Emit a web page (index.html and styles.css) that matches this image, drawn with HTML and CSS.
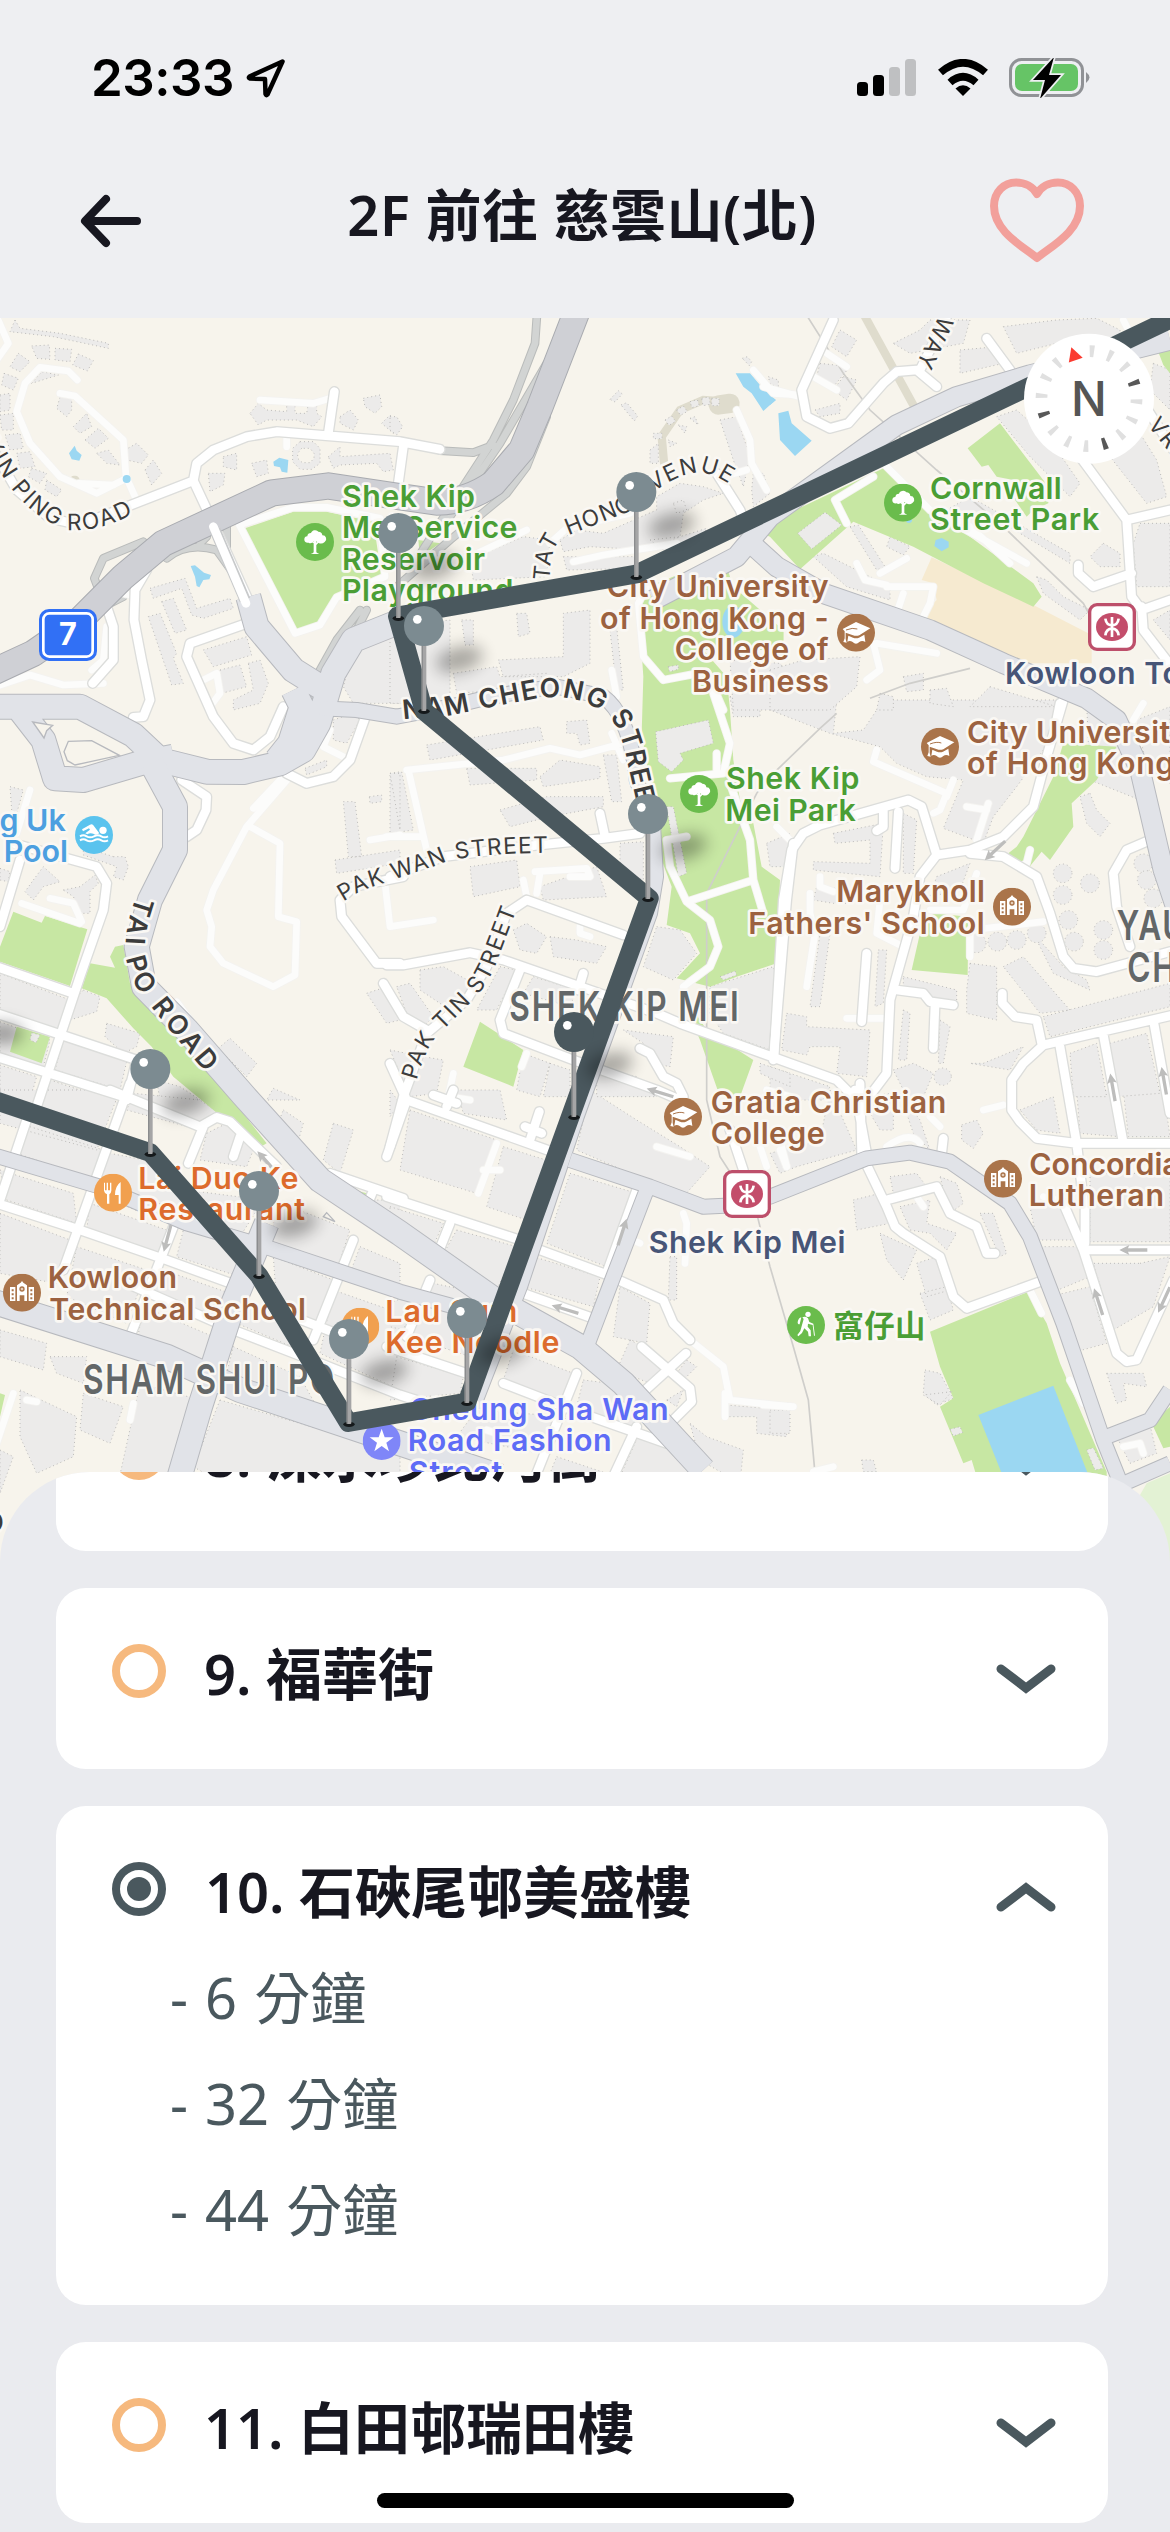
FILE: index.html
```html
<!DOCTYPE html>
<html lang="zh-Hant">
<head>
<meta charset="utf-8">
<title>2F 前往 慈雲山(北)</title>
<link rel="stylesheet" href="styles.css">
</head>
<body>
<div class="screen">
  <header class="top">
    <div class="status">
      <div class="status-left">
        <span class="time">23:33</span>
        <svg class="loc" viewBox="0 0 40 40"><path d="M36.5 3.5 L3.5 18.5 Q2 20 4 20.5 L19 21 L19.500 36 Q20 38 21.500 36.500 Z"/></svg>
      </div>
      <div class="status-right">
        <svg width="60" height="38" viewBox="0 0 60 38"><rect x="0" y="23" width="11" height="14" rx="3.500"/><rect x="16" y="16" width="11" height="21" rx="3.500"/><rect x="32" y="8" width="11" height="29" rx="3.500" fill="#bfc0c2"/><rect x="48" y="0" width="11" height="37" rx="3.500" fill="#bfc0c2"/></svg>
        <svg width="52" height="38" viewBox="0 0 52 38"><path d="M26 37 L18.500 29.500 Q26 23 33.500 29.500 Z"/><path d="M13 23.500 Q26 12 39 23.500" fill="none" stroke="#000" stroke-width="7.500"/><path d="M3.500 13.500 Q26 -6 48.500 13.500" fill="none" stroke="#000" stroke-width="7.500"/></svg>
        <svg width="82" height="40" viewBox="0 0 82 40"><rect x="1.500" y="1.500" width="72" height="36" rx="11" fill="none" stroke="#909296" stroke-width="3"/><rect x="6" y="6" width="63" height="27" rx="7" fill="#66c466"/><path d="M77 14 Q84 19.500 77 25Z" fill="#909296"/><path d="M45 -1 L24 22 H36 L31 41 L52 17 H40 Z" fill="#000" stroke="#eeeff2" stroke-width="3.500" paint-order="stroke"/></svg>
      </div>
    </div>
    <div class="nav">
      <svg class="back" viewBox="0 0 62 54"><path d="M57 27 H7 M26 5 L5 27 L26 49"/></svg>
      <h1>2F 前往 慈雲山(北)</h1>
      <svg class="heart" viewBox="0 0 94 86"><path d="M47 80 C34 69 4 54 4 28 C4 14 14 4.500 26 4.500 C35 4.500 43 9 47 16 C51 9 59 4.500 68 4.500 C80 4.500 90 14 90 28 C90 54 60 69 47 80 Z"/></svg>
    </div>
  </header>

  <section class="map">
  <svg class="map-canvas" viewBox="0 954 3510 3750">
    <defs>
      <filter id="soft" x="-60%" y="-100%" width="220%" height="300%"><feGaussianBlur stdDeviation="24"/></filter>
      <g id="highway">
        <g class="t2"><path d="M-40 1095L100 1030L230 940L370 800L490 700L815 549L985 528L1200 560L1310 576Q1400 576 1480 520L1565 420L1620 290L1740 -20"/></g>
      </g>
      <g id="ramp">
        <g class="t2"><path d="M430 695L310 745L283 805L300 850L370 855M500 745Q560 695 650 720L700 790L740 870M600 700L620 680M680 720V640M320 885L370 860M1080 900L1010 990L960 1080L920 1250L830 1350M1100 900L1000 1100L950 1250"/></g>
        <g class="t3"><path d="M442 0L435 100L370 270L310 390L200 560L60 780M470 160L330 400L180 620M150 422L250 428L310 405M470 320L410 470L350 550L180 690L20 830"/></g>
      </g>
      <g id="arterial">
        <g class="t5"><path class="w75" d="M-20 20H240L400 105L480 180L620 215L730 216L840 190L910 150L955 70L1000 -80L1060 -180L1210 -240M745 -310L770 -220L880 -90L960 -40M880 -30L905 20L870 130L830 180M60 30L130 120L165 235L250 240L420 190L520 170"/></g>
        <g class="t5"><path class="w75" d="M455 190L525 320V450L450 600L410 740L432 860L560 990L730 1185L960 1440L1200 1600L1470 1790L1740 1940L1870 2050L2110 2310"/></g>
        <g class="t3"><path class="w45" d="M-210 1195L-100 1200L20 1220L180 1190Q330 1150 500 1130L640 1160Q720 1220 740 1410L790 1560L798 1700L780 1810L560 2420L390 2930L250 3290"/></g>
        <g class="t8"><path class="w45" d="M-20 195L300 290L560 400L780 465L1200 605L1400 660"/><path class="w75" d="M-20 635L500 800L720 900L1200 1060L1500 1160M800 400L700 640L600 950L530 1190"/></g>
        <g class="t9"><path class="w45" d="M540 210L780 290L940 350L1050 345L1140 320L1430 205L1560 188L1680 215L1860 340L1920 440L2020 700L2140 1050L2200 1200M770 300L670 560L590 770"/></g>
        <g class="t10"><path class="w45" d="M1200 900L1140 990L1010 1040M1040 1190L1200 1120"/></g>
        <g class="t4"><path class="w60" d="M-350 870L-100 740L0 620L380 345L560 260L780 195L1200 90M-80 680L20 770L160 850L480 960L700 1060L950 1165L1040 1230L1110 1380L1180 1680L1220 1800"/></g>
      </g>
      <g id="minor">
        <g class="t2"><path d="M-20 420L50 540L150 625L240 645L380 590L580 512L590 460L640 420L740 380L830 365L1200 395L1320 418M985 370L1003 245M580 512L640 640L740 860M1210 410L1195 520M440 780L405 840L402 930L425 1050L450 1170L430 1220L400 1222M320 890L340 950V1050L278 1120M740 940L570 1000L560 1040L640 1220L700 1300L760 1320L810 1280L850 1190"/></g>
        <g class="t5"><path d="M545 240L620 290L618 330L590 390L560 410M860 220L920 250L1000 230L1050 180L1100 40M60 480L0 680M40 430L290 500L320 550L310 630L240 830L110 1220M-10 800L220 880M-10 940L410 1080L380 1200M-10 1070L370 1190M1210 530L1060 560L1020 600L1025 650L1130 790H1200"/></g>
        <g class="t6"><path d="M-10 795H40L240 758L340 780L600 870L800 940L870 970L1200 1090L1340 1140L1400 1200M0 530L160 470L400 440L640 415L750 400M630 340L645 410M390 810L330 960L340 1000L550 1080L800 1170L870 1200M700 705L410 600L350 640L290 800L230 900L110 1000L40 1190L0 1340M-20 850L40 950L110 990M580 820L565 870M1150 1080L1190 600L1210 430M750 1045L780 1060L820 1130L860 1150L880 1190"/></g>
        <g class="t7"><path d="M12 1070L40 600L65 450L100 400L150 375L415 300L455 320L500 465L600 450L700 410L790 320L830 170L880 0L890 -30M500 465L450 530L430 650L360 900L350 1120L290 1200M600 460L700 470L800 530L840 640L880 770L910 805L980 815L1200 755M385 335L375 505M340 330V380L320 392M1140 420L1070 450L1030 520L1040 620L1080 740M1210 945L820 1035L760 1090L725 1140V1230L750 1265L800 1315L920 1330H1200M697 880V910L735 950L800 960L815 1030M290 760L275 965M380 870L460 880L480 905L550 915M495 915L490 1045M870 1040L920 1330L940 1500M1000 1005L1060 1330M1150 960L1200 1240"/></g>
        <g class="t10"><path d="M880 340L940 480L1040 790L1070 815L1100 810L1210 570M940 480H1210M945 460V340M290 225L350 350L375 410L400 430L510 500L550 620L590 655L810 575M350 330L500 290L540 370L620 410L650 490H675M520 145L515 190M270 -20L275 190M255 0L290 190"/></g>
        <g class="t9"><path d="M0 -80L50 30L500 190M50 30L-10 200M-10 320L390 450M450 480L640 550L820 630L850 700L900 750M180 400L140 500M120 570L50 740M400 610L610 685M740 300L650 550M-10 770L230 850M340 880L560 965L830 1060M560 850L440 1150M740 1010L670 1160M755 770L900 895L905 935L850 990M888 790L750 915M448 65L420 150M405 110L455 130M190 0L170 50M130 15L200 40M1020 120L1060 240"/></g>
        <g class="t8"><path d="M390 -20L190 540M80 90L0 330M-10 340L240 420L500 510L720 590M700 200L720 140M610 110L565 220M540 360L390 740M380 580L700 720L960 820L1200 915L1340 960M330 0L600 110L650 82L690 95L830 230M1060 450L940 750M990 250L1210 325M880 680L1060 750M1100 350L1120 300"/></g>
        <g class="t4"><path d="M190 30L95 240L110 320L180 355L235 340L340 220L380 185L440 180L500 230M450 180L530 20M650 85L720 180M930 440L1070 630L1200 600M1070 630L1085 860L1115 900L1200 870M1085 790L970 830L925 790V765M1115 890L1120 960L1220 1090M870 1180L860 1230M1120 280L1210 420M-160 490L-90 600L-60 680"/></g>
      </g>
      <g id="lane">
        <g class="t2"><path d="M232 210L205 183L120 172L75 220L50 305L90 400L180 500L290 550L380 505M180 250L225 258L370 390L378 500L405 560M235 520L340 525M780 270L940 280L1000 262M-10 20L25 100L-10 150M718 645L880 592H980L1140 625L1155 800L1010 862L960 945L885 970L718 645M0 1125L90 1095L190 1125L310 1120M860 385V410M370 850L410 860M320 950L310 1050L275 1080M610 1110L650 1090L660 1150L630 1190"/></g>
        <g class="t3"><path d="M480 700L530 655L720 610M550 755L640 735L700 725L860 700M240 740L410 660M770 830L745 880L760 1040L820 1110L950 1085L1000 1200M1040 300L1080 390L1085 460L1130 540M1090 180L1150 250L1230 255M665 1080L680 1160M1000 500L1070 480"/></g>
        <g class="t4"><path d="M-20 230L90 260M170 130L230 170M130 200L200 240M350 470L480 600L770 760M310 500L195 570L230 640M480 600L600 650L720 760M260 760L285 810L350 825M330 790L410 745M350 830L490 830L480 880L440 960M400 850L370 940M320 1000L500 1030M310 1000L330 1080L290 1110M1060 30L1080 70"/></g>
        <g class="t5"><path d="M870 230L740 380L640 570L620 630L635 680L630 740L670 790L820 860L885 825L890 665L835 650L840 430L750 380M850 230L760 325M65 610L240 670M150 595L220 610L245 665M90 270L50 400M970 140L1030 170M990 90L970 140M1110 420L1200 405M1155 550L1170 680L1300 660M1160 860L1215 960M530 905L570 960"/></g>
        <g class="t6"><path d="M50 210L340 180L480 145L570 165L700 130M55 210L110 450M-10 410H100M665 100L700 180M970 -20L1020 130L1000 220L840 235M980 160V220M1020 250L1080 420L1090 540L890 605L840 500L830 420L890 410M1090 540L1120 640M890 605L960 660L985 740L960 800L880 860M435 515L590 505L600 530H540M450 520L440 580M400 540L410 590M570 680V700L600 710M410 1060L395 1100M190 1120L175 1190L240 1200"/></g>
        <g class="t7"><path d="M320 150L310 185L530 280L510 330L490 340M550 240L530 290M655 310L620 420M590 320L650 330M120 580V640L135 700L110 860M150 530V560L190 575M330 600L320 700L400 740M600 770V690L820 665M480 630H580L620 520M780 450L770 490L750 500M230 955H340M20 380L60 420M1120 10L1090 60"/></g>
        <g class="t9"><path d="M900 750L1000 830L1020 930L1200 950M1005 910V980M880 370L890 400L885 520M740 455L750 460M320 160L265 310M280 240H330M800 170L900 200M1110 170L1130 230M1170 180L1190 230M290 1020L320 1030"/></g>
        <g class="t10"><path d="M-20 945L70 950M130 1145L190 1130M30 150L50 230M-10 0L60 20M640 60L700 45M780 600L815 670M900 870L940 940M1060 1070L1110 1060L1120 1090M350 170Q420 120 450 160M480 80L510 110M440 320L460 350M820 320L900 340"/></g>
        <g class="t8"><path d="M40 910L-20 1090M80 930L110 935M400 940L390 990"/></g>
      </g>
      <symbol id="tree" viewBox="-57 -57 114 114"><circle r="57" fill="#6abc4c"/><path fill="#fff" d="M-4 4L-14-2L-12-5L-4-1V-4H4V2L12-4L14-1L4 9V31Q8 34 13 36H-13Q-6 34-4 31Z"/><path fill="#fff" d="M-12-27A13 13 0 0 1 10-31A12 12 0 0 1 22-20A11 11 0 0 1 29 0Q20 8 10 2L4-2H-4Q-12 7-19 2Q-30 4-32-6Q-33-16-23-17Q-22-27-12-27Z"/></symbol>
      <symbol id="college" viewBox="-57 -57 114 114"><circle r="57" fill="#aa744a"/><path fill="#fff" d="M-40-11L0-32L43-13L10 8Q0 11-9 8L-31 0V19L-28 30L-38 28L-34 17V-4Z"/><path fill="none" stroke="#aa744a" stroke-width="3" d="M-30-8Q-10-16 4-11"/><path fill="#fff" d="M-23 9L-9 15Q0 18 9 15L25 6L28 28Q18 22 10 28Q0 38-10 28Q-18 23-26 27Z"/></symbol>
      <symbol id="school" viewBox="-57 -57 114 114"><circle r="57" fill="#aa744a"/><path fill="#fff" d="M-36-17H-20V25H-36ZM20-17H36V25H20ZM-15-22L-4-30L0-35L4-30L15-22V25H7V8H-7V25H-15Z"/><circle cy="-11" r="8" fill="#aa744a"/><circle cy="-11" r="4" fill="#e5cdb9"/><path fill="#aa744a" d="M-31-10h6v6h-6zM-31 2h6v6h-6zM-31 14h6v6h-6zM25-10h6v6h-6zM25 2h6v6h-6zM25 14h6v6h-6z"/></symbol>
      <symbol id="food" viewBox="-57 -57 114 114"><circle r="57" fill="#f1a04f"/><path fill="#fff" d="M-27-30H-24V-7H-19V-30H-15V-7H-9V-30H-5V-6Q-6 3-11 5V33H-18V5Q-25 3-27-6ZM23-32V33H17V7H6Q6-20 23-32Z"/></symbol>
      <symbol id="swim" viewBox="-57 -57 114 114"><circle r="57" fill="#5ac3ee"/><circle cx="27" cy="-14" r="11" fill="#fff"/><path fill="#fff" d="M-36-17L-12-31Q-6-34-2-29L16-5Q6 3-2-4Q-12-8-20-2L-26-5L-12-16L-15-20L-33-11Z"/><path fill="none" stroke="#fff" stroke-width="6" d="M-42 4Q-32-2-22 4T0 4T22 4T42 4M-42 16Q-32 10-22 16T0 16T22 16T42 16"/></symbol>
      <symbol id="hike" viewBox="-57 -57 114 114"><circle r="57" fill="#6abc4c"/><circle cx="6" cy="-32" r="8" fill="#fff"/><path fill="#fff" d="M-11-23Q-2-27 6-20L10-9L22-4L27 32H24L20 0L6-4L5 5L14 16L15 34H8L6 20L-5 10L-12 24L-23 34L-26 30L-17 18L-7-18Z"/><path fill="#fff" d="M-14-23L-19-2Q-26-2-25-9Q-23-21-14-23Z"/></symbol>
      <symbol id="sight" viewBox="-57 -57 114 114"><circle r="57" fill="#7f86f8"/><path fill="#fff" d="M0-37L9-11H36L14 5L22 31L0 15L-22 31L-14 5L-36-11H-9Z"/></symbol>
      <symbol id="mtr" viewBox="-74 -74 148 148"><rect x="-67" y="-67" width="134" height="134" rx="22" fill="#fff" stroke="#bd4f6b" stroke-width="10"/><ellipse rx="48" ry="42" fill="#c34d6b"/><path fill="none" stroke="#fff" stroke-width="8" d="M0-30V30M-20-25Q-17-5 0-5Q17-5 20-25M-20 25Q-17 5 0 5Q17 5 20 25"/></symbol>
      <symbol id="pin" viewBox="-70 -70 300 350"><ellipse cx="106" cy="100" rx="72" ry="36" transform="rotate(-15 106 100)" fill="#000" opacity=".32" filter="url(#soft)"/><ellipse cy="256" rx="17" ry="8" fill="#15191b"/><rect x="-7" y="50" width="14" height="205" rx="3" fill="#a5a5a6"/><rect x="-7" y="50" width="4" height="205" fill="#8b8c8e"/><circle r="60"/><circle cx="-20" cy="-20" r="13" fill="#fff"/></symbol>
      <symbol id="oneway" viewBox="-45 -20 90 40"><path fill="#bdbdbc" d="M-42 0L-12-15L-16-5H42V5H-16L-12 15Z"/></symbol>
    </defs>

    <rect x="0" y="954" width="3510" height="3750" fill="#f7f4ec"/>

    <g class="sand">
      <path class="t4" d="M485 742L790 885L965 975V1060H740L465 955L470 900L500 870L490 820L455 810Z"/>
    </g>
    <g class="trail">
      <path class="t3" d="M822 458L815 380L870 300L940 270L1010 275"/><path class="t3 wide" d="M985 285L1020 280"/><path class="t4" d="M285 20L430 285"/>
      <path class="t2" d="M222 510H226"/>
    </g>

    <g class="block">
      <path class="t5" d="M0 820L210 900L170 1000L0 940ZM0 965L150 1020L130 1100L0 1060ZM190 1015L380 1085L360 1170L165 1110ZM0 1095L110 1130L90 1200H0ZM150 1140L360 1210H130ZM250 870L300 890L290 935L210 960L200 930ZM320 970L420 1000L410 1040L370 1060L315 1010ZM470 1140L540 1160L600 1200H480Z"/>
      <path class="t8" d="M0 0L360 0L290 180L0 100ZM400 10L600 30L660 70L600 120L380 60ZM620 130L680 100L760 180L740 230L600 210ZM90 110L310 180L280 270L50 190ZM0 240L220 310L230 400L20 330ZM330 190L540 230L560 300L790 330L720 440L480 390L260 300ZM0 370L210 450L170 580L0 550ZM270 340L500 420L480 490L260 420ZM550 420L740 470L720 560L530 500ZM490 540L690 610L660 690L430 600ZM230 470L440 540L380 700L200 620ZM430 650L640 740L600 830L410 760ZM820 330L1050 420L1010 540L820 470ZM820 500L1000 570L940 720L830 640ZM1080 470L1200 520V600L1050 550ZM730 620L850 700L900 780L710 700ZM1000 600L1200 670V900L960 790ZM700 770L900 860L950 950L670 890ZM660 930L900 1000L1200 1090V1200H700L580 1130ZM420 880L600 930L520 1200H350ZM250 910L370 950L330 1060L240 1020ZM60 900L230 980L220 1100L110 1150L60 1040ZM0 720L140 760L130 840L0 800ZM150 800L260 800L250 880L170 850ZM0 1080L40 1100L0 1210ZM1120 330H1200V420L1080 370ZM850 60L910 100L890 170L830 110ZM1000 100L1060 120L1020 250L970 210Z"/>
      <path class="t9" d="M0 0L30 40L0 80ZM60 60L320 150L260 310L30 240ZM340 170L500 220L440 400L290 350ZM200 0L330 0L350 90L220 70ZM540 250L740 310L650 530L470 460ZM0 350L160 400L120 490L0 440ZM200 420L380 470L320 600L150 510ZM430 500L630 560L610 650L400 590ZM130 580L320 620L240 800L60 740ZM0 640L90 600L40 720L0 710ZM20 800L220 860L210 910L0 930ZM370 780L550 850L520 940L340 870ZM580 870L660 880L760 990L720 1020L560 950ZM260 960L530 980L450 1090L200 1040ZM500 1100L650 1150H480ZM690 590L780 640L770 760L670 740ZM720 750L760 770L820 840L780 880L680 840ZM890 810L920 830L880 870L860 850ZM830 930L880 900L860 950ZM900 1000L950 1040L1060 1080L1050 1180L930 1110ZM600 0L740 90L870 170L960 230L880 320L790 280L560 180ZM840 500H860V630H835ZM1010 945L1190 960V1040L1100 1030V980H1010Z"/>
      <path class="t9" d="M750 1025L820 1060L900 1120V1160H690Z"/>
      <path class="t10" d="M750 60L850 20L870 130L800 120ZM920 0L1030 0L1050 140L930 130ZM1060 0L1180 0L1200 140H1075ZM960 250H1200V455H960ZM780 350L870 340L920 450L800 450ZM800 470L920 470L960 560L840 610ZM840 620L960 590L1010 760L900 790ZM1110 520L1200 500L1150 650L1030 720L970 520ZM1010 850L1120 850L1130 890L1060 880L1070 930L1040 940ZM250 330L330 310L360 400L260 420ZM330 430L440 480L400 570L350 510ZM440 520L500 500L540 600L470 620ZM450 610L530 590L550 660L480 690ZM270 20L370 10L370 120L330 120ZM390 10L450 90L480 180L430 130ZM180 0L260 180L80 230L30 250L0 190L150 150ZM360 260L440 250L470 290L370 310ZM510 260L560 280L580 340L540 370ZM390 350L480 330L470 400L560 430L530 480L480 430L420 420ZM630 370L670 370L710 490L690 500ZM465 840L510 850L550 925L500 945L460 910ZM0 960H60V1030H0ZM275 1110H310L320 1145H280ZM575 105L620 90L640 130L610 175L575 150ZM1040 1040L1140 1005L1160 1090L1080 1120Z"/>
      <path class="t7" d="M0 0H200L190 100L280 90L340 0H540L870 0L820 150L740 260L670 350L640 430L520 385L580 240L470 230L380 190L330 140L180 100L0 30ZM190 400L340 370L330 530L130 510V485L300 490V420L195 430ZM400 340L440 360L430 520H400ZM130 600L190 610H250V570L140 560ZM150 700H180L150 920H120ZM325 750H350L340 910L315 920ZM50 940L110 950L110 980L300 990L290 1130L200 1120L210 1040H120L110 1065L35 1050ZM400 830L560 870V920L400 860ZM600 790L680 800V960L590 940V870ZM700 800L760 770L830 850L900 930L810 940L740 850ZM950 10L1080 100L1110 300L960 240ZM1100 60L1200 20V250L1130 200ZM400 930L420 940L410 1080H385ZM510 960L540 980L520 1090H505ZM640 1090L760 1040L720 1110L600 1090ZM960 280L980 330L1020 370L990 410L950 370L930 290ZM500 530L600 490L570 570L480 590ZM370 1110L430 1090L490 1120L460 1190H410ZM820 950L1200 850V920L840 1010ZM900 1060L980 1030L1010 1190H910ZM1020 1030L1130 1000L1170 1180L1040 1190ZM0 1100L180 1160L160 1200H0ZM790 700L850 820L960 870L950 840L880 800Z"/>
      <g class="t7"><circle cx="878" cy="520" r="28"/><circle cx="878" cy="585" r="28"/><circle cx="895" cy="660" r="28"/><circle cx="912" cy="725" r="28"/><circle cx="960" cy="550" r="28"/><circle cx="1000" cy="690" r="28"/><circle cx="1000" cy="750" r="28"/><circle cx="1120" cy="490" r="28"/><circle cx="1130" cy="540" r="28"/><circle cx="1150" cy="595" r="28"/><circle cx="620" cy="730" r="28"/><circle cx="682" cy="725" r="28"/><circle cx="740" cy="720" r="28"/><circle cx="800" cy="700" r="28"/><circle cx="518" cy="1130" r="26"/></g>
      <path class="t6" d="M110 135L450 80L460 120L120 180ZM530 65L590 60L600 130L570 135L560 100H530ZM800 95L955 60L970 130L870 160L880 180L845 215L805 185ZM0 220L35 215L70 390L0 400ZM230 205L440 205L440 240L240 255ZM450 230L510 180L630 200V235L460 260ZM330 330L470 290L640 290V320L480 350L360 380ZM640 165L680 165L695 305H665ZM240 500L380 480L390 560L250 590ZM450 560L620 500L650 590L460 600ZM370 690L410 670L470 710L440 760L390 750ZM480 710L560 720L650 740L620 790L490 770ZM690 430L760 425V540L690 520ZM830 320H850L890 520L865 530ZM800 680L870 690L920 760L850 840L760 800ZM90 810L160 800L250 850L180 930L90 870ZM20 860L60 850L130 950L90 990L50 940ZM0 1050L100 1070L160 1080L140 1180L60 1190ZM330 800L380 810L320 930L260 930ZM430 830L560 870L540 920L400 880ZM400 1060L480 1090L450 1190L380 1170ZM480 1090L540 1110V1190H460ZM620 1100L740 1130L800 1190H620ZM700 990L850 1010L840 1100L790 1090L760 1030ZM960 860L1150 800L1160 850L1140 1050L1000 1000L960 940ZM1110 1090L1200 1120V1160L1110 1120ZM1020 -10H1110V50H1030ZM1130 430L1200 400V500H1140Z"/>
      <path class="t5" d="M1030 305H1065L1085 470H1045ZM1005 480L1200 450V490L1010 520ZM1170 220H1200V390ZM1108 290L1145 285V305L1110 310ZM915 205L980 180V200L920 225ZM1000 60L1060 40L1080 60L1040 130L1000 120ZM340 470L375 470L385 500L370 540L340 530L350 500L250 465V440ZM100 540L130 500L180 545L130 560L100 600L75 575ZM190 570L240 560L285 525L295 550L270 575V640L245 640L220 590ZM1100 880L1160 860L1200 940V960L1160 970ZM655 1045L690 1015L770 1090L740 1130ZM30 260L70 270L50 340L35 330ZM0 505L30 515L25 545L0 540ZM820 1165L900 1200H800Z"/>
      <path class="t2" d="M45 30L60 55L180 70L325 100V115L160 80L30 65ZM95 108L148 105L150 148L110 145ZM165 115L215 118L210 155L165 150ZM235 132L280 152L262 183L218 165ZM55 130L90 155L60 185L30 170ZM12 190L55 205L40 240L5 225ZM0 255L30 250V300L0 305ZM0 315L40 310V360H5ZM15 375L60 370L70 415L30 420ZM50 430L90 425L105 470L60 475ZM95 475L140 490L120 520L85 500ZM140 510L185 540L170 560L135 540ZM185 245H215V300L200 320L170 295ZM220 350L260 310L275 350L240 370ZM255 390L295 355L325 385L285 415ZM290 430L325 420L360 465L320 460ZM375 420L410 400L445 435L425 460L380 450ZM435 480L460 450L485 490L455 525ZM95 220L125 185L175 195ZM750 310L775 280L800 300L860 305V285H885V310H920L925 280H950V310L965 320L940 350L890 330H800L775 345ZM1020 320L1050 300L1075 330L1060 360L1020 340ZM1090 265L1140 255L1145 290L1125 310L1095 290ZM1145 340L1170 315L1200 345L1180 370ZM670 440L710 430V480L670 470ZM625 490L675 490L670 525L630 545ZM755 460L800 450L805 490L770 500ZM985 440L1020 410V440L1170 430L1180 480L1150 485L1130 460L1020 465L1000 475ZM450 835L555 805L565 830L590 895L690 865L700 895L610 925L575 915L545 835L460 865ZM485 875L520 865L560 960L525 970ZM445 920L480 910L530 1030L520 1045L550 1120L515 1125ZM610 1020L740 980L755 1035L640 1070ZM660 1080L720 1065L740 1130L665 1150ZM745 1060L780 1050L805 1120L780 1180L700 1200V1170L760 1140ZM1070 1000L1160 960L1200 950V1180H1060L1030 1130L1050 1060Z"/>
      <path class="t2" fill-rule="evenodd" d="M900 395H940L960 415V460L935 478H900L878 455V415ZM905 415L893 430V445L907 458H930L942 445V430L930 415Z"/>
      <path class="t3" d="M0 950L180 930V1180H0ZM190 1090L320 1070L330 1100L470 1090V1130L200 1150ZM325 1050L520 1040V910L600 900V1060L520 1100H340ZM380 910H410L420 970L385 980ZM215 930H250V1005H225ZM660 960L680 950L700 1140H680ZM510 690L560 660L640 670L800 600V560L870 520L940 530L1000 550L940 570L880 610L870 680L770 720L600 710L520 725ZM240 750L400 680L480 690L470 800L250 810ZM520 740L740 740L740 775L530 780ZM780 690L870 680L950 655L930 700L820 720ZM990 330L1040 320L1080 440L1060 530L1030 450ZM1090 490H1120L1140 550L1090 590L1085 540ZM660 268L685 242L697 252L675 276ZM693 285L710 278L743 318L733 333ZM1057 145L1072 140L1085 155L1078 167ZM1135 200L1165 210V235L1140 220ZM780 420L805 400V460H780ZM835 390L860 400L840 410ZM865 345L890 350L885 370ZM900 325L915 320L925 345ZM0 320L20 320L38 350L20 375L0 360ZM1020 1050L1170 1060L1200 1100V1200H1030ZM850 580L880 570L890 600L860 610Z"/>
      <path class="t3" d="M825 330l20-12 12 16-20 12zM860 300l20-12 12 16-20 12zM900 275l22-6 6 18-22 6zM935 265l22-4 4 22-22 4zM965 265h22v22h-22zM790 370h26v16h-26z"/>
      <path class="t4" d="M210 60L260 90L230 140L185 110ZM150 160L240 170L190 230L140 200ZM220 200L260 210L230 270L190 240ZM135 300L210 280V310L150 320ZM370 100L450 60L480 30L600 30L580 100L420 130ZM570 120L680 110L700 160L570 190ZM700 50L860 30L980 25L1050 60V90L900 90L740 130ZM680 320L740 300L840 390L930 520L900 560L780 440ZM1020 440L1110 370L1160 450L1190 560L1130 580ZM240 650L265 645L345 770L320 780ZM130 740L160 730L360 830V870L230 830ZM360 680L420 710L400 735L350 710ZM530 600L600 560L900 730V760L700 640ZM800 800L830 810L880 860L960 900L930 930L820 850ZM1110 640L1200 640V830H1100L1090 700ZM1000 700L1050 730V770H990L960 740ZM0 1080L100 1050L270 1040L260 1130L180 1200H0ZM400 1100L460 1090V1140L410 1145ZM480 1140L530 1135L550 1190L480 1180ZM330 1150L370 1160V1200H320ZM660 1130L860 1190H600ZM1150 930L1200 900V990ZM1150 160L1200 180V300L1140 240Z"/>
    </g>

    <g class="park">
      <path class="t2" d="M735 655L880 605H980L1120 635L1145 800L1010 855L960 940L890 960Z"/>
      <path class="t3" d="M85 690L150 700L180 680L90 740Z"/>
      <path class="t6" d="M800-350L1000-430L1030-340L1180-210V-150H940L1010-70L1020 30L1030 180L1050 300L1090 370L1115 500L1170 540L1160 790L1040 830L960 860L860 835L930 760L900 700L830 675L845 560L800 440L820 320L780 250L755 100L760-70L745-290ZM870 870L950 990L1090 1080L1050 1190H990L930 1020L900 950ZM270 965L400 1050L370 1160L220 1100Z"/>
      <path class="t7" d="M880 130L1040 140L980 240L905 310L910 380L840 480L815 455L775 505L720 490L715 460L740 440L760 410L850 230ZM490 640L595 650L593 825L425 810L450 700Z"/>
      <path class="t5" d="M40 635L125 668L135 648L262 688L210 858L0 785V740ZM270 790L345 803L330 770L345 740L370 735L390 850L540 1020L690 1190L800 1330L780 1342L640 1230L520 1130L455 1040L400 985L320 895L245 865ZM50 980L150 1010L125 1090L30 1055Z"/>
      <path class="t8" d="M1015 288L1100 310L1080 355ZM0 910L15 915L0 980Z"/>
      <path class="t4" d="M-50 660L350 470L480 600L600 680L790 820L815 860L790 890L640 820L430 710L250 635L90 778L0 680ZM690 340L835 530V580L790 600L770 620L735 570L730 510L680 500L655 465L635 470L593 415ZM1155 100L1200 90V190L1180 165ZM0 960L40 965V990L0 1000Z"/>
      <path class="t10" d="M480 725L775 605L830 700L870 820L1010 1145V1160H620L605 1110L580 1120L510 950L550 925L510 830ZM1145 1000L1200 950V1070L1180 1075Z"/>
      <path class="t10" fill="#e3f2d4" d="M1130 1180L1200 1150V1500L1090 1250Z"/>
    </g>
    <g class="block">
      <path class="t6" d="M797 95L955 60L970 130L870 160L880 180L845 215L805 185ZM830 320H850L890 520L865 530ZM835-100L865-105V-92L838-85ZM990 830L1035 813L1040 825L1000 840Z"/>
      <path class="t4" d="M83 670L165 607L215 645L125 717Z"/><path class="t10" d="M540 1018L570 1010L578 1028L550 1038ZM950 1080L970 1073L1000 1135L975 1140ZM545 905L510 945L460 915Z"/><path class="t5" d="M95 998L120 1005L108 1028L90 1020Z"/>
    </g>
    <g class="water">
      <path class="t10" d="M625 975L850 887L953 1150H695Z"/>
      <path class="t3" d="M1037 190H1080L1110 225L1157 270L1120 303L1085 250L1060 230ZM1165 310L1195 302L1205 340L1265 392L1215 438L1170 390Z"/>
      <path class="t4" d="M0 258L18 270L0 285Z"/><path class="t4" d="M497 690L515 684L536 695V712L515 724L493 708Z"/><circle class="t4" cx="417" cy="630" r="9"/>
      <ellipse class="t3" cx="1030" cy="935" rx="33" ry="48"/><circle class="t3" cx="963" cy="932" r="10"/>
      <path class="t2" d="M224 407L230 422L245 435L238 452L215 448L207 430ZM820 455L838 443L865 450L862 488L845 485L840 472L822 468ZM572 768L585 766L612 788L633 795L628 808L610 810L598 832L590 828L585 800Z"/>
    </g>

    <g class="rail"><path class="t4" d="M100 0L220 190L300 300L500 480L700 650L940 880L1010 1010"/><path class="t4" d="M300 1165L420 1120L600 1075"/><path class="t7" d="M200 40L150 85L0 230L-40 280L-190 580V1200L-150 1370L-40 1540L0 1700L70 1940L115 2100L135 2320"/></g>

    <use href="#ramp" class="ramp-edge"/><use href="#ramp" class="ramp"/>
    <use href="#lane" class="lane-edge"/><use href="#lane" class="lane"/>
    <g class="water"><circle class="t2" cx="380" cy="507" r="12"/></g>
    <use href="#minor" class="minor-edge"/><use href="#minor" class="minor"/>
    <g class="art-edge"><use href="#arterial"/></g><g class="art"><use href="#arterial"/></g>
    <g class="land"><path class="t5" d="M98 66L158 76L140 92L132 114Z"/><path class="t5" d="M205 124L275 122L358 166L225 195L202 182L192 155Z"/><path class="t8" d="M970 380L980 368L1005 395Z"/></g>
    <use href="#highway" class="high-edge"/><use href="#highway" class="high"/>
    <g class="t2"><path class="bridge-edge" d="M645 660L735 870"/><path class="bridge" d="M640 650L738 880"/></g>

    <g>
      <use href="#oneway" x="-45" y="-20" width="90" height="40" transform="translate(2985 2552) rotate(-43)"/>
      <use href="#oneway" x="-45" y="-20" width="90" height="40" transform="translate(1980 3278) rotate(17)"/>
      <use href="#oneway" x="-45" y="-20" width="90" height="40" transform="translate(1695 3928) rotate(17)"/>
      <use href="#oneway" x="-45" y="-20" width="90" height="40" transform="translate(1867 3696) rotate(108)"/>
      <use href="#oneway" x="-45" y="-20" width="90" height="40" transform="translate(3400 3750)"/>
      <use href="#oneway" x="-45" y="-20" width="90" height="40" transform="translate(3295 3905) rotate(72)"/>
      <use href="#oneway" x="-45" y="-20" width="90" height="40" transform="translate(3492 3900) rotate(-65)"/>
      <use href="#oneway" x="-45" y="-20" width="90" height="40" transform="translate(3338 3262) rotate(80)"/>
      <use href="#oneway" x="-45" y="-20" width="90" height="40" transform="translate(3492 3242) rotate(80)"/>
      <use href="#oneway" x="-45" y="-20" width="90" height="40" transform="translate(502 3715) rotate(-75)"/>
      <use href="#oneway" x="-45" y="-20" width="90" height="40" transform="translate(800 3485) rotate(48)"/>
    </g>

    <g class="street">
      <path id="s1" class="guide" d="M-100 1220Q-30 1380 30 1460Q105 1560 205 1590Q300 1596 405 1538"/>
      <path id="s2" class="guide" d="M1648 1742L1654 1680Q1665 1625 1690 1612L1885 1535Q1930 1505 1970 1470Q2050 1414 2110 1418Q2150 1425 2200 1460"/>
      <path id="s3" class="guide" d="M2818 945L2750 1090"/>
      <path id="s4" class="guide" d="M1030 2705Q1080 2670 1150 2650L1320 2592Q1400 2560 1660 2558"/>
      <path id="s5" class="guide" d="M1250 3242Q1275 3150 1310 3110L1410 3010Q1460 2960 1485 2900L1560 2700"/>
      <path id="s6" class="guide" d="M1210 2158L1370 2142Q1500 2115 1610 2095Q1700 2085 1760 2110Q1820 2135 1850 2180Q1875 2240 1885 2300L1915 2430L1925 2520"/>
      <path id="s7" class="guide" d="M408 2688Q373 2790 377 2850Q380 2930 430 2990Q500 3080 610 3210"/>
      <path id="s8" class="guide" d="M3442 1275L3530 1385"/>
      <text><textPath href="#s1" startOffset="100%" text-anchor="end">YIN PING ROAD</textPath></text>
      <text><textPath href="#s2" textLength="700">TAT HONG AVENUE</textPath></text>
      <text><textPath href="#s3">WAY</textPath></text>
      <text><textPath href="#s4" textLength="645">PAK WAN STREET</textPath></text>
      <text><textPath href="#s5" textLength="610">PAK TIN STREET</textPath></text>
      <text class="main"><textPath href="#s6" textLength="975">NAM CHEONG STREET</textPath></text>
      <text class="main"><textPath href="#s7" textLength="620">TAI PO ROAD</textPath></text>
      <text><textPath href="#s8">VROAD</textPath></text>
      <text x="-50" y="4596" class="main">O</text>
    </g>

    <g class="district">
      <text transform="translate(1528 3063) scale(.76 1)" textLength="912">SHEK KIP MEI</text>
      <text transform="translate(249 4182) scale(.76 1)" textLength="998">SHAM SHUI PO</text>
      <text transform="translate(3350 2820) scale(.76 1)">YAU</text>
      <text transform="translate(3382 2947) scale(.76 1)">CHUEN</text>
    </g>

    <g class="poi green">
      <text x="1026" y="1520" textLength="399">Shek Kip</text><text x="1026" y="1615" textLength="526">Mei Service</text><text x="1026" y="1709" textLength="429">Reservoir</text><text x="1026" y="1803" textLength="514">Playground</text>
      <text x="2790" y="1496" textLength="395">Cornwall</text><text x="2790" y="1590" textLength="508">Street Park</text>
      <text x="2178" y="2368" textLength="400">Shek Kip</text><text x="2176" y="2462" textLength="391">Mei Park</text>
      <text x="2500" y="4012" textLength="276">窩仔山</text>
    </g>
    <g class="poi brown">
      <text x="1820" y="1792" textLength="666">City University</text><text x="1800" y="1887" textLength="686">of Hong Kong -</text><text x="2024" y="1980" textLength="462">College of</text><text x="2076" y="2075" textLength="411">Business</text>
      <text x="2901" y="2228" textLength="666">City University</text><text x="2901" y="2322" textLength="622">of Hong Kong</text>
      <text x="2509" y="2707" textLength="446">Maryknoll</text><text x="2245" y="2802" textLength="709">Fathers' School</text>
      <text x="2132" y="3338" textLength="707">Gratia Christian</text><text x="2132" y="3432" textLength="342">College</text>
      <text x="3088" y="3524" textLength="451">Concordia</text><text x="3086" y="3618" textLength="406">Lutheran</text>
      <text x="143" y="3865" textLength="388">Kowloon</text><text x="148" y="3959" textLength="770">Technical School</text>
    </g>
    <g class="poi navy"><text x="3015" y="2052" textLength="644">Kowloon Tong</text><text x="1946" y="3758" textLength="590">Shek Kip Mei</text></g>
    <g class="poi orange"><text x="415" y="3566" textLength="480">Lai Duo Ke</text><text x="415" y="3660" textLength="500">Restaurant</text><text x="1156" y="3965" textLength="396">Lau Sum</text><text x="1156" y="4059" textLength="522">Kee Noodle</text></g>
    <g class="poi blue"><text x="197" y="2492" text-anchor="end">Cheng Uk</text><text x="204" y="2587" text-anchor="end">Swimming Pool</text></g>
    <g class="poi violet"><text x="1228" y="4260" textLength="778">Cheung Sha Wan</text><text x="1223" y="4354" textLength="612">Road Fashion</text><text x="1226" y="4448" textLength="281">Street</text></g>

    <g>
      <use href="#tree" x="888" y="1569" width="114" height="114"/><use href="#tree" x="2652" y="1451" width="114" height="114"/><use href="#tree" x="2040" y="2325" width="114" height="114"/>
      <use href="#college" x="2511" y="1841" width="114" height="114"/><use href="#college" x="2763" y="2183" width="114" height="114"/><use href="#college" x="1992" y="3293" width="114" height="114"/>
      <use href="#school" x="2979" y="2663" width="114" height="114"/><use href="#school" x="9" y="3821" width="114" height="114"/><use href="#school" x="2952" y="3479" width="114" height="114"/>
      <use href="#food" x="282" y="3521" width="114" height="114"/><use href="#food" x="1024" y="3923" width="114" height="114"/>
      <use href="#swim" x="225" y="2448" width="114" height="114"/><use href="#hike" x="2361" y="3918" width="114" height="114"/><use href="#sight" x="1088" y="4266" width="114" height="114"/>
      <use href="#mtr" x="3262" y="1807" width="148" height="148"/><use href="#mtr" x="2167" y="3508" width="148" height="148"/>
      <g class="shield"><rect x="117" y="1827" width="174" height="156" rx="30" fill="#3170f5"/><rect x="130" y="1840" width="148" height="130" rx="18" fill="none" stroke="#fff" stroke-width="8"/><text x="204" y="1935" text-anchor="middle">7</text></g>
    </g>

    <path class="route" d="M3600 915L1909 1722L1192 1848L1272 2133L1948 2695L1401 4206L1045 4268L777 3827L451 3458L-60 3286"/>

    <ellipse cx="10" cy="3100" rx="60" ry="32" fill="#000" opacity=".35" filter="url(#soft)"/>
    <g class="pins">
      <use href="#pin" x="1839" y="1406" width="300" height="350"/>
      <use href="#pin" x="1125" y="1529" width="300" height="350"/>
      <use href="#pin" x="1202" y="1808" width="300" height="350"/>
      <use href="#pin" x="1874" y="2372" width="300" height="350"/>
      <use href="#pin" class="current" x="1652" y="3026" width="300" height="350"/>
      <use href="#pin" x="381" y="3137" width="300" height="350"/>
      <use href="#pin" x="707" y="3503" width="300" height="350"/>
      <use href="#pin" x="1331" y="3884" width="300" height="350"/>
      <use href="#pin" x="977" y="3947" width="300" height="350"/>
    </g>

    <g class="compass" transform="translate(3267 1196)">
      <circle r="195" fill="#fff"/>
      <g transform="rotate(-19)">
        <path d="M0-163L22-122H-22Z" fill="#fb3b30"/>
        <g fill="#e0e0e0">
          <path id="tick" d="M-8-160H8L5-125H-5Z" transform="rotate(22.5)"/>
          <use href="#tick" transform="rotate(22.500)"/><use href="#tick" transform="rotate(45)"/><use href="#tick" transform="rotate(90)"/><use href="#tick" transform="rotate(112.500)"/><use href="#tick" transform="rotate(135)"/><use href="#tick" transform="rotate(180)"/><use href="#tick" transform="rotate(202.500)"/><use href="#tick" transform="rotate(225)"/><use href="#tick" transform="rotate(270)"/><use href="#tick" transform="rotate(292.500)"/><use href="#tick" transform="rotate(315)"/>
        </g>
        <path fill="#585858" d="M160-8V8L125 5V-5ZM-160-8V8L-125 5V-5ZM-8 160H8L5 125H-5Z"/>
      </g>
      <text y="52" text-anchor="middle">N</text>
    </g>
  </svg>
  </section>

  <main class="sheet">
    <div class="stops">
      <article class="stop"><div class="row"><i class="dot"></i><h2>8. 深水埗北河街</h2><svg class="chev" viewBox="0 0 60 30"><path d="M5 5L30 24L55 5"/></svg></div></article>
      <article class="stop"><div class="row"><i class="dot"></i><h2>9. 福華街</h2><svg class="chev" viewBox="0 0 60 30"><path d="M5 5L30 24L55 5"/></svg></div></article>
      <article class="stop open"><div class="row"><i class="dot on"></i><h2>10. 石硤尾邨美盛樓</h2><svg class="chev" viewBox="0 0 60 30"><path d="M5 25L30 6L55 25"/></svg></div>
        <ul><li>- 6 分鐘</li><li>- 32 分鐘</li><li>- 44 分鐘</li></ul>
      </article>
      <article class="stop"><div class="row"><i class="dot"></i><h2>11. 白田邨瑞田樓</h2><svg class="chev" viewBox="0 0 60 30"><path d="M5 5L30 24L55 5"/></svg></div></article>
    </div>
    <div class="home"></div>
  </main>
</div>
</body>
</html>
```

FILE: styles.css
```css
* { box-sizing: border-box; margin: 0; padding: 0; }
body { background: #eaebef; color: #171720; font-family: "Noto Sans", "Noto Sans CJK TC", sans-serif; }
.screen { display: flex; flex-direction: column; width: 1170px; height: 2532px; overflow: hidden; }

.top { flex: none; height: 318px; background: #eeeff2; padding-top: 58px; }
.status { display: flex; justify-content: space-between; align-items: center; height: 40px; padding: 0 79px 0 91px; }
.status-left, .status-right { display: flex; align-items: center; }
.status-left { gap: 15px; }
.status-right { gap: 20px; }
.time { font: 600 51px/40px Inter, sans-serif; color: #000; letter-spacing: -0.5px; width: 140px; white-space: nowrap; }
.loc { width: 40px; height: 40px; fill: none; stroke: #000; stroke-width: 4.5; stroke-linejoin: round; }
.nav { display: flex; justify-content: space-between; align-items: center; height: 86px; margin-top: 80px; padding: 0 86px 0 80px; }
.back { width: 62px; height: 54px; fill: none; stroke: #171720; stroke-width: 8; stroke-linecap: round; stroke-linejoin: round; }
.nav h1 { font-size: 56px; font-weight: 600; line-height: 86px; letter-spacing: 0.5px; white-space: nowrap; padding-left: 32px; margin-top: -14px; }
.heart { width: 94px; height: 86px; fill: none; stroke: #f2a09b; stroke-width: 8; stroke-linejoin: round; }

.map { flex: none; height: 1154px; }
.map-canvas { display: block; width: 1170px; height: 1250px; font-family: Inter, "Noto Sans CJK TC", sans-serif; }
.t2 { transform: translate(0, 930px); }
.t3 { transform: translate(1170px, 930px); }
.t4 { transform: translate(2310px, 930px); }
.t5 { transform: translate(0, 2100px); }
.t6 { transform: translate(1170px, 2100px); }
.t7 { transform: translate(2310px, 2100px); }
.t8 { transform: translate(0, 3270px); }
.t9 { transform: translate(1170px, 3270px); }
.t10 { transform: translate(2310px, 3270px); }
.land { fill: #f7f4ec; stroke: #b7b9be; stroke-width: 4; }
.sand { fill: #f6ead0; }
.trail { fill: none; stroke: #dfdccd; stroke-width: 25; stroke-linecap: round; }
.trail .wide { stroke-width: 58; }
.block { fill: #ecebea; stroke: #bcbbb9; stroke-width: 3; stroke-dasharray: 3 9; }
.park { fill: #c7e7a3; }
.water { fill: #9bd7f2; }
.rail { fill: none; stroke: #cfcecb; stroke-width: 5; }
.ramp, .ramp-edge, .lane, .lane-edge, .minor, .minor-edge, .art, .art-edge, .high, .high-edge, .bridge, .bridge-edge { fill: none; stroke-linejoin: round; }
.ramp, .ramp-edge, .lane, .lane-edge, .minor, .minor-edge, .bridge { stroke-linecap: round; }
.ramp-edge { stroke: #b9bbba; stroke-width: 26; }
.ramp { stroke: #d2d4d3; stroke-width: 20; }
.lane-edge { stroke: #f4f3f0; stroke-width: 25; }
.lane { stroke: #fcfcfb; stroke-width: 20; }
.minor-edge { stroke: #dcdddb; stroke-width: 34; }
.minor { stroke: #fff; stroke-width: 26; }
.art-edge { stroke: #b7b9be; --edge: 6px; }
.art { stroke: #e1e3e8; --edge: 0px; }
.w75 { stroke-width: calc(72px + var(--edge)); }
.w60 { stroke-width: calc(58px + var(--edge)); }
.w45 { stroke-width: calc(42px + var(--edge)); }
.high-edge { stroke: #a9abb0; stroke-width: 82; }
.high { stroke: #cfd0d5; stroke-width: 76; }
.bridge { stroke: #fff; stroke-width: 26; }
.bridge-edge { stroke: #c8cacb; stroke-width: 34; }
.guide { fill: none; stroke: none; }
.street text, .district text, .poi text { paint-order: stroke; stroke: #faf8f4; stroke-width: 16px; stroke-linejoin: round; }
.street text { font-size: 68px; letter-spacing: 6px; fill: #3c3c3c; font-weight: 400; }
.street .main { font-size: 80px; font-weight: 600; }
.district text { font-size: 125px; font-weight: 600; letter-spacing: 6px; fill: #636768; }
.poi text { font-size: 91px; font-weight: 600; }
.green text { fill: #4a9e35; }
.brown text { fill: #9c6240; }
.navy text { fill: #475577; }
.orange text { fill: #dd6b2c; }
.blue text { fill: #4c9fe0; }
.violet text { fill: #5e6cf6; }
.shield text { font-size: 92px; font-weight: 700; fill: #fff; }
.route { fill: none; stroke: #4a585e; stroke-width: 56; stroke-linejoin: round; }
.pins { fill: #7c8b91; }
.pins .current { fill: #4a585e; }
.compass text { font-size: 142px; font-weight: 500; fill: #555; }

.sheet { position: relative; flex: none; height: 1060px; background: #eaebef; border-radius: 90px 90px 0 0; overflow: hidden; }
.stops { display: flex; flex-direction: column; gap: 37px; margin: -102px 62px 0 56px; }
.stop { height: 181px; background: #fff; border-radius: 30px; padding: 0 52px 0 56px; }
.stop.open { height: 499px; }
.row { display: flex; align-items: center; height: 166px; }
.dot { flex: none; display: grid; place-items: center; width: 54px; height: 54px; border: 8px solid #f6b97e; border-radius: 50%; }
.dot.on { border-color: #4a585e; }
.dot.on::before { content: ""; width: 24px; height: 24px; border-radius: 50%; background: #4a585e; }
.row h2 { flex: 1; margin: 3px 0 0 38px; font-size: 56px; font-weight: 600; line-height: 80px; }
.open h2 { margin-left: 39px; }
.chev { width: 60px; height: 30px; margin-top: 16px; fill: none; stroke: #4a585e; stroke-width: 9; stroke-linecap: round; stroke-linejoin: miter; }
.stop ul { list-style: none; padding: 0 0 0 58px; margin-top: -28px; }
.stop li { height: 106px; font-size: 56px; line-height: 106px; color: #4a585e; word-spacing: 2.5px; }
.home { position: absolute; left: 377px; bottom: 24px; width: 417px; height: 15px; border-radius: 8px; background: #000; }
```
